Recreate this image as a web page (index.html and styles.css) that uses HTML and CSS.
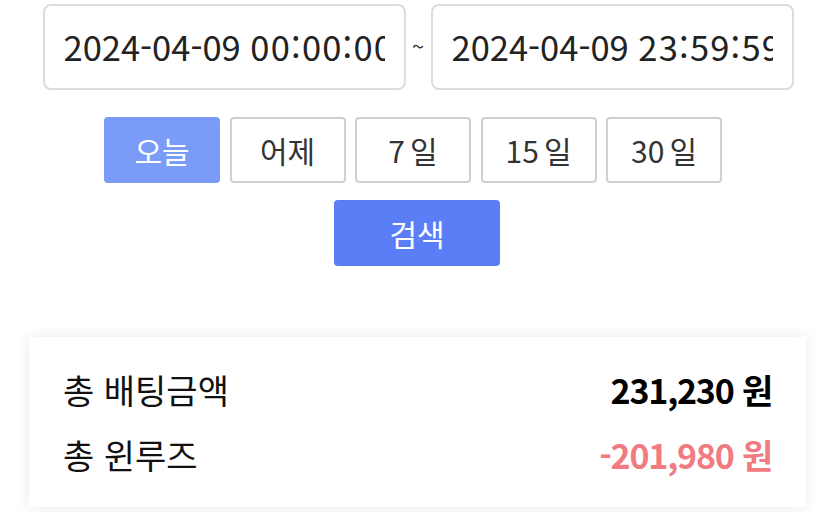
FILE: index.html
```html
<!DOCTYPE html>
<html lang="ko">
<head>
<meta charset="utf-8">
<link rel="stylesheet" href="styles.css">
</head>
<body>
<div class="page">
  <div class="date-row">
    <div class="date-input"><span class="date-text">2024-04-09 <span class="time">00:00:00</span></span></div>
    <span class="tilde">~</span>
    <div class="date-input"><span class="date-text">2024-04-09 <span class="time">23:59:59</span></span></div>
  </div>
  <div class="range-row">
    <button class="range-btn active">오늘</button>
    <button class="range-btn">어제</button>
    <button class="range-btn">7<span class="sp"> </span>일</button>
    <button class="range-btn">15<span class="sp"> </span>일</button>
    <button class="range-btn">30<span class="sp"> </span>일</button>
  </div>
  <div class="search-row">
    <button class="search-btn">검색</button>
  </div>
  <div class="summary">
    <div class="summary-row">
      <span class="label">총 배팅금액</span>
      <span class="value">231,230 원</span>
    </div>
    <div class="summary-row">
      <span class="label">총 윈루즈</span>
      <span class="value negative">-201,980 원</span>
    </div>
  </div>
</div>
</body>
</html>
```

FILE: styles.css
```css
* { box-sizing: border-box; }
html, body { margin: 0; padding: 0; background: #fff; }
body {
  font-family: "Noto Sans CJK KR", "Noto Sans", sans-serif;
  color: #222;
  width: 835px;
  height: 512px;
  overflow: hidden;
}
.page { padding-top: 4px; }
.date-row {
  display: flex;
  justify-content: center;
  align-items: center;
  padding-left: 1px;
}
.date-input {
  width: 363px;
  height: 86px;
  border: 2px solid #dcdcdc;
  border-radius: 8px;
  padding: 0 19px 0 19px;
  display: flex;
  align-items: center;
  overflow: hidden;
  white-space: nowrap;
}
.date-text {
  font-size: 34.5px;
  color: #222;
  overflow: hidden;
  display: block;
  width: 100%;
  margin-top: -2px;
}
.time { letter-spacing: 1.2px; }
.tilde {
  width: 25px;
  text-align: center;
  font-size: 22px;
  color: #333;
  margin-top: -4px;
}
.range-row {
  display: flex;
  justify-content: center;
  gap: 9.5px;
  margin-top: 27px;
  padding-right: 9px;
}
.range-btn {
  width: 116px;
  height: 66px;
  border: 2px solid #d0d0d0;
  border-radius: 4px;
  background: #fff;
  font-family: inherit;
  font-size: 30px;
  color: #333;
  padding: 0;
}
.range-btn .sp { font-size: 18px; }
.range-btn.active {
  background: #7a9bf7;
  border-color: #7a9bf7;
  color: #fff;
}
.search-row {
  display: flex;
  justify-content: center;
  margin-top: 17px;
  padding-right: 1px;
}
.search-btn {
  width: 166px;
  height: 66px;
  border: none;
  border-radius: 4px;
  background: #5b7ef6;
  color: #fff;
  font-family: inherit;
  font-size: 30px;
  padding: 0;
}
.summary {
  margin: 71px 29px 0 29px;
  height: 170px;
  background: #fff;
  box-shadow: 0 0 14px rgba(0, 0, 0, 0.09);
  padding: 20px 34px 0 34px;
}
.summary-row {
  display: flex;
  justify-content: space-between;
  align-items: center;
  height: 65px;
  font-size: 34px;
}
.label { color: #111; }
.value { font-weight: 700; color: #000; letter-spacing: -1.2px; }
.value.negative { color: #f07c82; }
```
